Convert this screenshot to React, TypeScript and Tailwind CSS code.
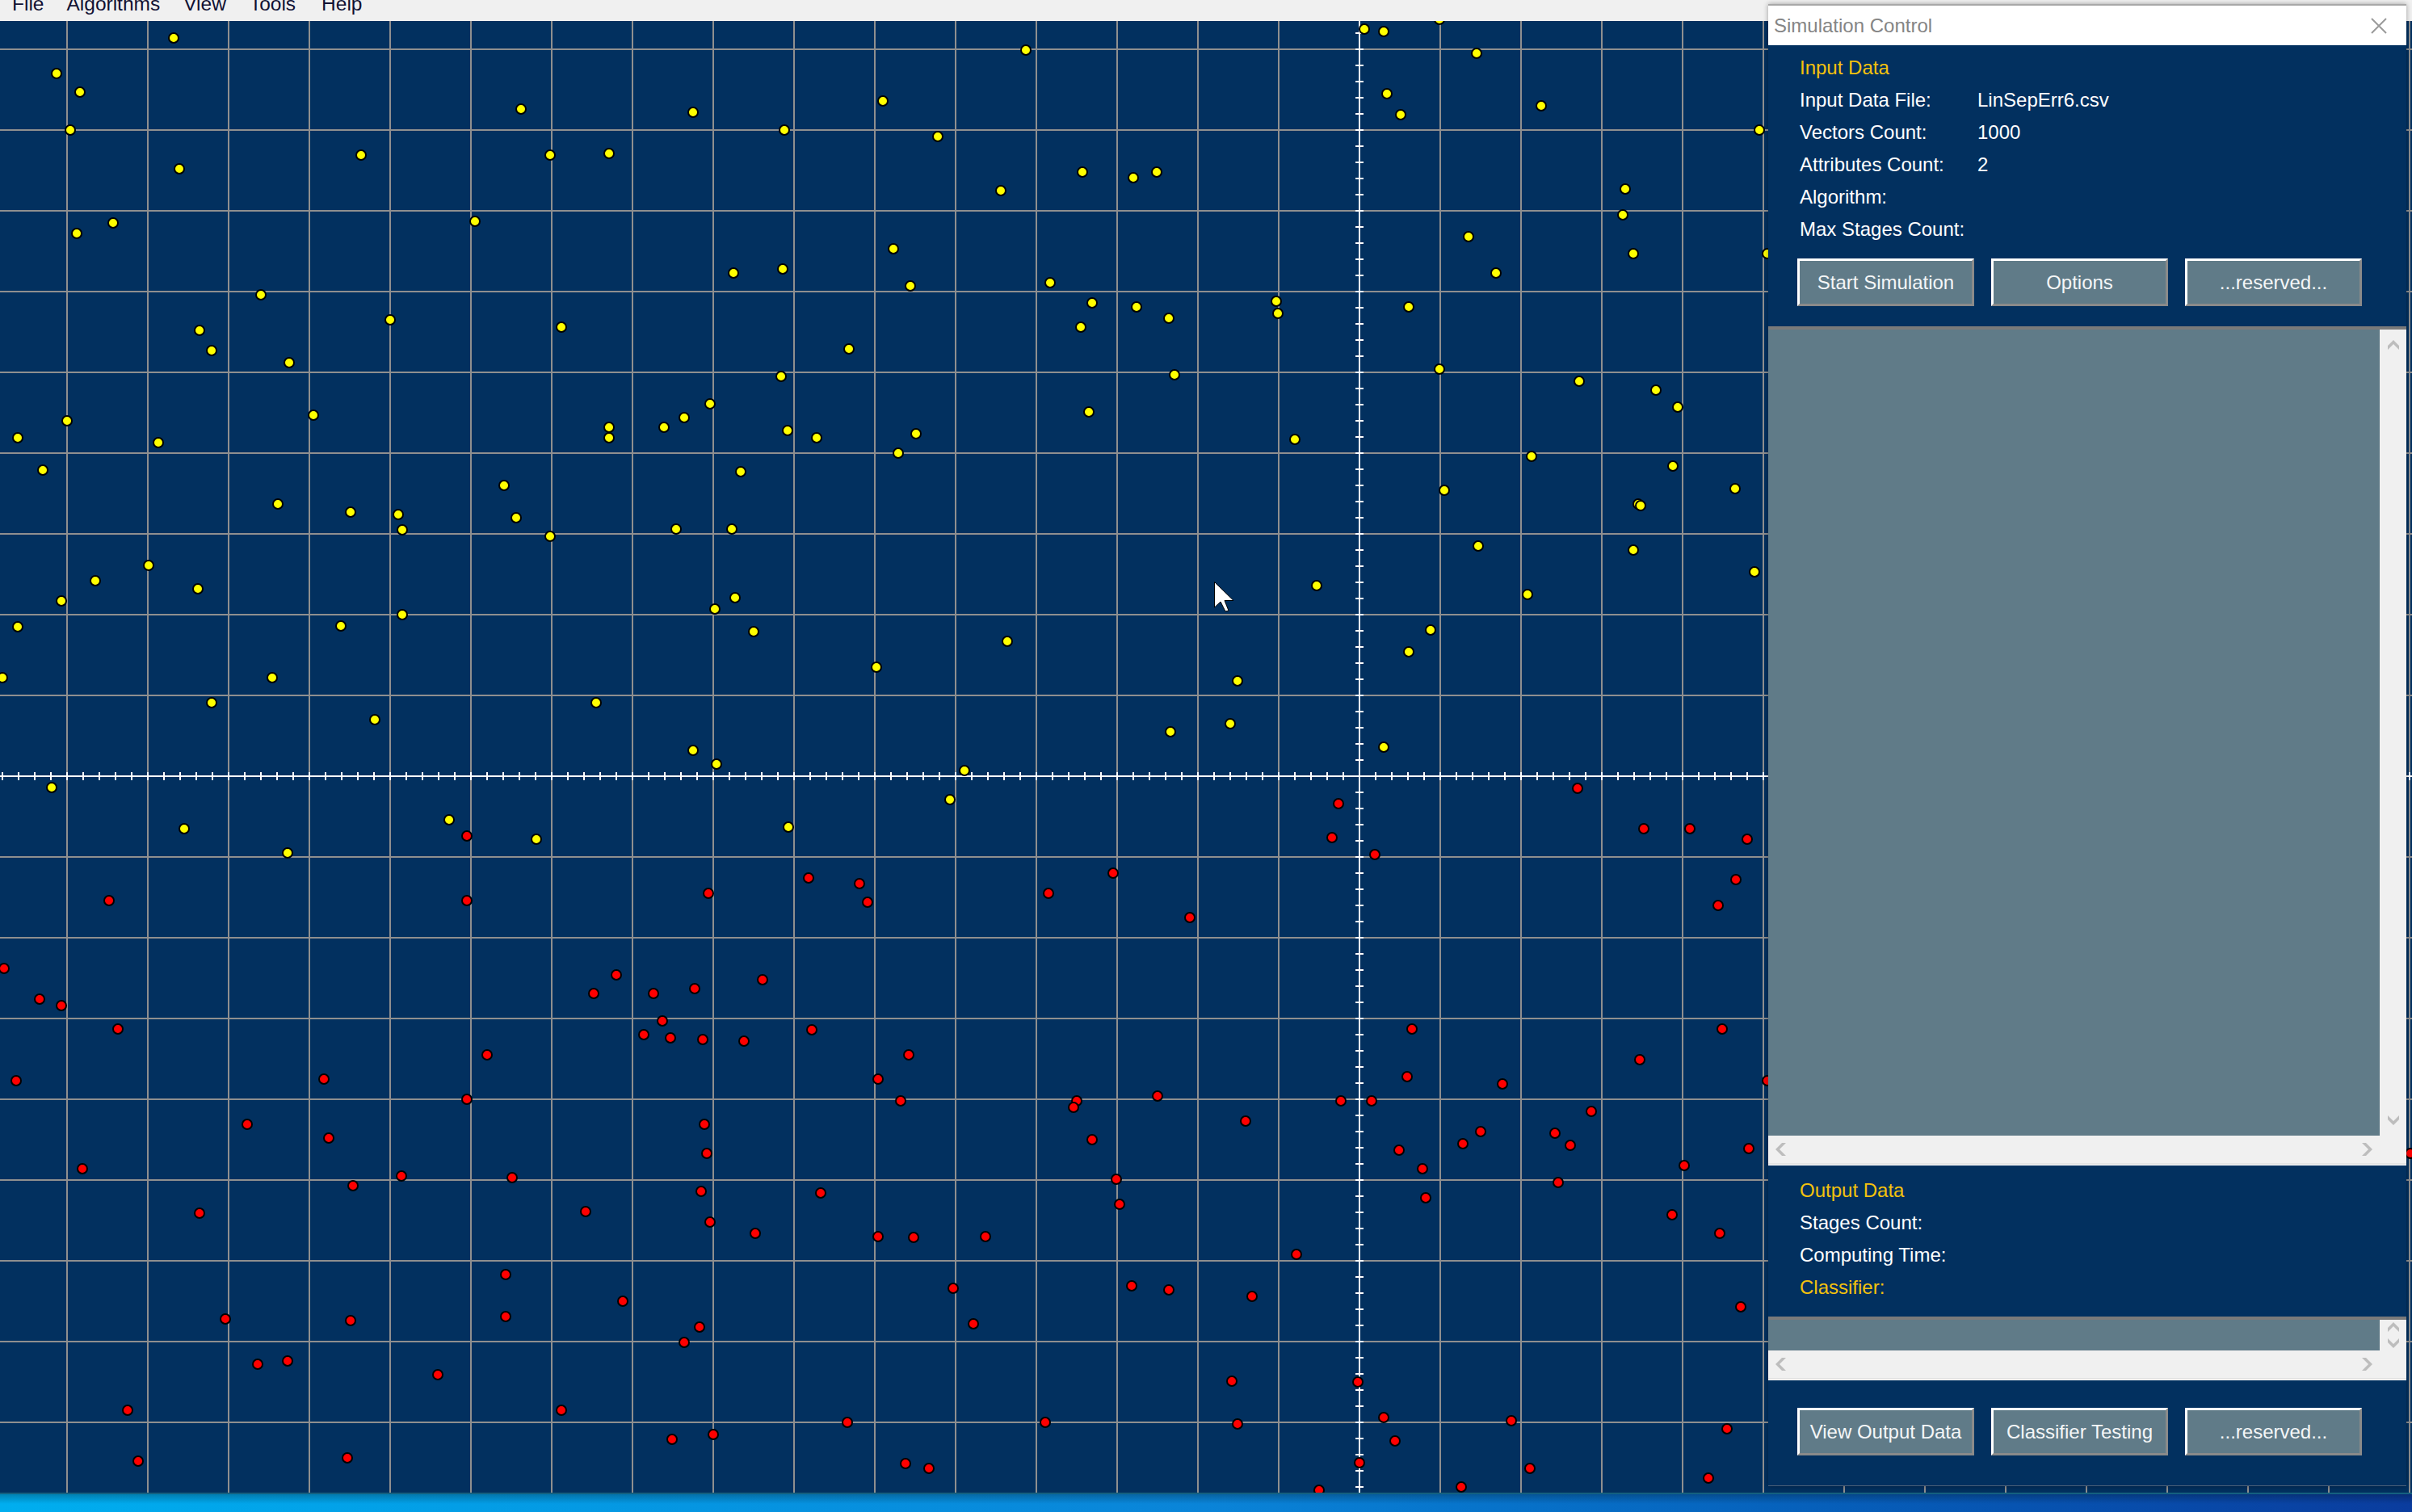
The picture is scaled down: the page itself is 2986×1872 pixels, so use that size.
import React from "react";

const SCALE = 2986 / 1568;
const CHART_TOP = 26;

const yellow: [number, number][] = [
  [113,25],[37,48],[52,60],[46,85],[117,110],[50,152],[74,145],[170,192],[130,215],[138,228],[188,236],[254,208],[204,270],[103,288],[44,274],[12,285],[28,306],[181,328],[228,333],[259,335],[262,345],[328,316],[336,337],[358,349],[97,368],[62,378],[40,391],[129,383],[12,408],[222,407],[262,400],[2,441],[177,441],[138,457],[244,468],[339,71],[235,101],[358,101],[396,100],[451,73],[510,85],[574,66],[610,89],[667,33],[651,124],[704,112],[737,116],[752,112],[309,144],[365,213],[477,178],[509,175],[581,162],[592,186],[683,184],[710,197],[739,200],[703,213],[760,207],[830,196],[831,204],[552,227],[508,245],[462,263],[445,272],[432,278],[396,278],[396,285],[512,280],[531,285],[584,295],[596,282],[708,268],[764,244],[482,307],[440,344],[476,344],[465,396],[478,389],[490,411],[655,417],[570,434],[388,457],[451,488],[466,497],[627,501],[761,476],[805,443],[800,471],[856,381],[842,286],[887,19],[900,21],[936,13],[960,35],[902,61],[911,75],[1002,69],[1144,85],[1057,123],[1055,140],[1062,165],[955,154],[973,178],[916,200],[936,240],[1027,248],[1077,254],[1091,265],[996,297],[939,319],[1088,303],[1128,318],[1065,328],[1067,329],[1062,358],[961,355],[993,387],[1141,372],[930,410],[916,424],[900,486],[1149,165],[34,512],[120,539],[187,555],[292,533],[349,546],[513,538],[618,520],
];

const red: [number, number][] = [
  [304,544],[71,586],[304,586],[461,581],[526,571],[559,575],[564,587],[682,581],[724,568],[774,597],[870.5,523],[866,545],[894,556],[1026,513],[1069,539],[1099,539],[1136,546],[1129,572],[1117,589],[3,630],[26,650],[40,654],[77,669],[11,703],[54,760],[130,789],[161,731],[211,702],[214,740],[230,771],[261,765],[304,715],[317,686],[333,766],[386,646],[401,634],[425,646],[452,643],[496,637],[419,673],[431,664],[436,675],[457,676],[484,677],[528,670],[571,702],[591,686],[586,716],[458,731],[460,750],[456,775],[462,795],[381,788],[491,802],[534,776],[571,804],[594,805],[641,804],[700,716],[698,720],[710,741],[753,713],[810,729],[726,767],[728,783],[872,716],[892,716],[918,669],[915,700],[977,705],[910,748],[925,760],[951,744],[963,736],[927,779],[1011,737],[1021,745],[1035,723],[1013,769],[1066,689],[1120,669],[1095,758],[1137,747],[1149,703],[1087,790],[1118,802],[1132,850],[843,816],[620,838],[633,861],[736,836],[760,839],[814,843],[147,858],[228,859],[329,829],[329,856],[405,846],[455,863],[445,873],[168,887],[187,885],[285,894],[83,917],[90,950],[226,948],[365,917],[437,936],[464,933],[551,925],[589,952],[604,955],[680,925],[801,898],[805,926],[883,899],[900,922],[907,937],[983,924],[884,951],[858,969],[950,967],[995,955],[1111,961],[1123,929],[1567,750],
];

const range = (from: number, to: number, step: number) => {
  const out: number[] = [];
  for (let v = from; v <= to; v += step) out.push(v);
  return out;
};

const AXIS_X = 1683;
const AXIS_Y = 961 - CHART_TOP;
const W = 2986;
const H = 1822;

function Chart() {
  const gridX = range(83, W, 100);
  const gridY = range(61 - CHART_TOP, H, 100);
  const ticksX = range(3, W, 20);
  const ticksY = range(21 - CHART_TOP + 20, H, 20);
  return (
    <svg width={W} height={H} viewBox={`0 0 ${W} ${H}`} className="block" shapeRendering="crispEdges">
      {gridX.map((x) => (
        <rect key={x} x={x - 1} y={0} width={2} height={H} fill="#8f8f8f" />
      ))}
      {gridY.map((y) => (
        <rect key={y} x={0} y={y - 1} width={W} height={2} fill="#8f8f8f" />
      ))}
      <rect x={0} y={AXIS_Y - 1} width={W} height={2} fill="#ffffff" />
      <rect x={AXIS_X - 1} y={0} width={2} height={H} fill="#ffffff" />
      {ticksX.map((x) => (
        <rect key={x} x={x - 1} y={AXIS_Y - 5} width={2} height={10} fill="#ffffff" />
      ))}
      {ticksY.map((y) => (
        <rect key={y} x={AXIS_X - 5} y={y - 1} width={10} height={2} fill="#ffffff" />
      ))}
      {yellow.map(([x, y], i) => (
        <circle key={`y${i}`} cx={Math.floor(x * SCALE)} cy={Math.floor(y * SCALE) - CHART_TOP} r={6} fill="#ffff00" stroke="#000000" strokeWidth={2} shapeRendering="auto" />
      ))}
      {red.map(([x, y], i) => (
        <circle key={`r${i}`} cx={Math.floor(x * SCALE)} cy={Math.floor(y * SCALE) - CHART_TOP} r={6} fill="#ff0000" stroke="#000000" strokeWidth={2} shapeRendering="auto" />
      ))}
      <path
        d="M1503.5 720.5 L1503.5 752 L1511 745 L1517 757 L1521 756 L1516 743.5 L1527 743.5 Z"
        transform={`translate(0 ${-CHART_TOP})`}
        fill="#ffffff"
        stroke="#000000"
        strokeWidth={1}
        shapeRendering="auto"
      />
    </svg>
  );
}

function PanelButton({ children }: { children: React.ReactNode }) {
  return (
    <button className="w-[219px] h-[59px] bg-[#607b88] text-[#f4f6f7] text-[24px] border-[3px] border-t-white border-l-white border-r-[#8a8a8a] border-b-[#8a8a8a] leading-none whitespace-nowrap">
      {children}
    </button>
  );
}

function Row({ label, value, accent }: { label: string; value?: string; accent?: boolean }) {
  return (
    <div className={`flex h-[40px] items-center ${accent ? "text-[#f4c20d]" : "text-white"}`}>
      <span className="w-[220px] shrink-0 whitespace-nowrap">{label}</span>
      {value && <span className="whitespace-nowrap">{value}</span>}
    </div>
  );
}

function Chevron({ dir }: { dir: "up" | "down" | "left" | "right" }) {
  const d = {
    up: "M2 10 L9 3 L16 10 L16 15 L9 8 L2 15 Z",
    down: "M2 3 L9 10 L16 3 L16 8 L9 15 L2 8 Z",
    left: "M10 1 L2 9 L10 17 L15 17 L7 9 L15 1 Z",
    right: "M8 1 L16 9 L8 17 L3 17 L11 9 L3 1 Z",
  }[dir];
  return (
    <svg width={18} height={18} viewBox="0 0 18 18" className="block">
      <path d={d} fill="#bdbdbd" />
    </svg>
  );
}

function TextArea({ height, small }: { height: number; small?: boolean }) {
  return (
    <div>
      <div className="h-[4px] bg-[#7a7a7a]" />
      <div className="flex" style={{ height }}>
        <div className="flex-1 bg-[#607b88]" />
        <div className={`w-[33px] bg-[#f0f0f0] flex flex-col items-center ${small ? "justify-center gap-[2px]" : "justify-between py-[10px]"}`}>
          <Chevron dir="up" />
          <Chevron dir="down" />
        </div>
      </div>
      <div className="h-[34px] bg-[#f0f0f0] flex items-center justify-between pl-[7px] pr-[40px]">
        <Chevron dir="left" />
        <Chevron dir="right" />
      </div>
      <div className="h-[3px] bg-[#e3e3e3] border-b border-white" />
    </div>
  );
}

function Panel() {
  return (
    <div className="absolute left-[2189px] top-[5px] w-[790px] h-[1835px] flex flex-col bg-[#02305f] border-t-2 border-b border-t-[#a8a8a8] border-b-[#4a5f78] shadow-[0_0_6px_rgba(0,0,0,0.35)] text-[24px] font-['Liberation_Sans',Arial,sans-serif]">
      <div className="h-[49px] shrink-0 bg-white flex items-center justify-between pl-[7px] pr-[24px] text-[#858585]">
        <span className="whitespace-nowrap">Simulation Control</span>
        <svg width={20} height={20} viewBox="0 0 20 20" className="block">
          <path d="M1 1 L19 19 M19 1 L1 19" stroke="#9a9a9a" strokeWidth={2} fill="none" />
        </svg>
      </div>
      <div className="pl-[39px] pt-[8px] h-[348px] shrink-0">
        <Row label="Input Data" accent />
        <Row label="Input Data File:" value="LinSepErr6.csv" />
        <Row label="Vectors Count:" value="1000" />
        <Row label="Attributes Count:" value="2" />
        <Row label="Algorithm:" />
        <Row label="Max Stages Count:" />
        <div className="flex gap-[21px] -ml-[3px] mt-[16px]">
          <PanelButton>Start Simulation</PanelButton>
          <PanelButton>Options</PanelButton>
          <PanelButton>...reserved...</PanelButton>
        </div>
      </div>
      <TextArea height={998} />
      <div className="pl-[39px] pt-[11px] h-[187px] shrink-0">
        <Row label="Output Data" accent />
        <Row label="Stages Count:" />
        <Row label="Computing Time:" />
        <Row label="Classifier:" accent />
      </div>
      <TextArea height={38} small />
      <div className="pl-[36px] pt-[34px] flex gap-[21px]">
        <PanelButton>View Output Data</PanelButton>
        <PanelButton>Classifier Testing</PanelButton>
        <PanelButton>...reserved...</PanelButton>
      </div>
    </div>
  );
}

export default function App() {
  return (
    <div className="relative w-[2986px] h-[1872px] overflow-hidden flex flex-col bg-[#02305f] font-['Liberation_Sans',Arial,sans-serif]">
      <div className="h-[26px] shrink-0 bg-[#f0f0f0] overflow-hidden">
        <div className="flex -mt-[9px] pl-[15px] gap-[29px] text-[24.5px] leading-[28px] text-[#111133]">
          <span>File</span>
          <span className="-ml-[1px]">Algorithms</span>
          <span>View</span>
          <span>Tools</span>
          <span className="ml-[3px]">Help</span>
        </div>
      </div>
      <div className="h-[1822px] shrink-0 overflow-hidden">
        <Chart />
      </div>
      <div className="flex-1 border-t-2 border-[#14607f] bg-gradient-to-r from-[#00aeef] via-[#0a84d8] to-[#0a3c9e] relative">
        <div className="absolute inset-x-0 top-0 h-[12px] bg-gradient-to-b from-[rgba(0,0,0,0.25)] to-transparent" />
      </div>
      <Panel />
    </div>
  );
}
